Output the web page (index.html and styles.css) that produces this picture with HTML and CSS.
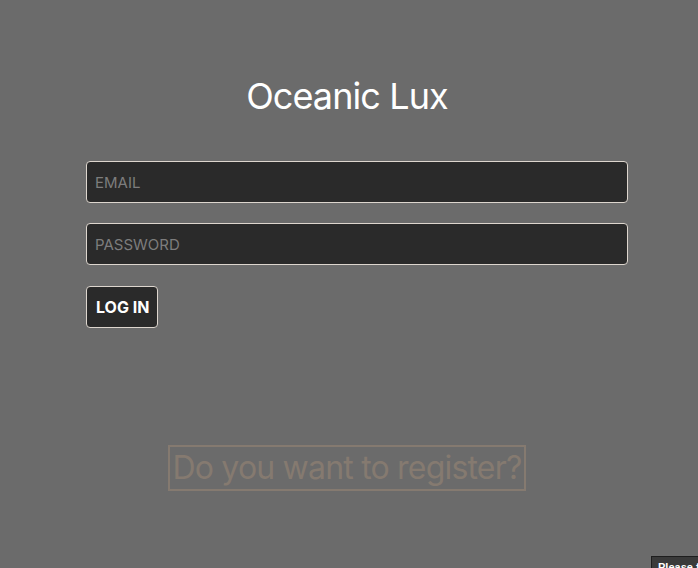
FILE: index.html
```html
<!DOCTYPE html>
<html>
<head>
<meta charset="utf-8">
<link rel="stylesheet" href="styles.css">
</head>
<body>
<main class="page">
  <h1 class="title">Oceanic Lux</h1>
  <form class="form">
    <input class="field" type="email" placeholder="EMAIL">
    <input class="field" type="password" placeholder="PASSWORD">
    <button class="btn" type="button">LOG IN</button>
  </form>
  <div class="register-wrap">
    <a class="register">Do you want to register?</a>
  </div>
</main>
<div class="tooltip">Please fill out this field.</div>
</body>
</html>
```
FILE: styles.css
```css
html, body {
  margin: 0;
  padding: 0;
  height: 100%;
  overflow: hidden;
}
body {
  background: #6b6b6b;
  font-family: Inter, "Noto Sans", sans-serif;
  position: relative;
}
.page {
  display: flex;
  flex-direction: column;
}
.title {
  margin: 74px 0 0;
  padding-right: 4px;
  text-align: center;
  font-size: 36px;
  letter-spacing: -0.9px;
  font-weight: 400;
  color: #ffffff;
  line-height: 44px;
}
.form {
  display: flex;
  flex-direction: column;
  align-items: flex-start;
  gap: 20px;
  margin: 43px 0 0 86px;
  width: 542px;
}
.field {
  box-sizing: border-box;
  width: 542px;
  height: 42px;
  background: #2a2a2a;
  border: 1px solid #ddd6ce;
  border-radius: 4px;
  padding: 0 8px;
  font-family: Inter, sans-serif;
  font-size: 15px;
  color: #fff;
  outline: none;
}
.field::placeholder {
  color: #7d7d7d;
}
.btn {
  box-sizing: border-box;
  height: 42px;
  margin-top: 1px;
  padding: 0 8px 0 9px;
  background: #2a2a2a;
  border: 1px solid #ddd6ce;
  border-radius: 4px;
  color: #ffffff;
  font-family: Inter, sans-serif;
  font-size: 16px;
  font-weight: 700;
}
.register-wrap {
  display: flex;
  justify-content: center;
  margin-top: 117px;
  padding-right: 4px;
}
.register {
  box-sizing: border-box;
  height: 46px;
  padding: 0 2px;
  border: 2px solid #857a70;
  color: #857a70;
  font-size: 32px;
  letter-spacing: -0.8px;
  line-height: 42px;
}
.tooltip {
  position: absolute;
  left: 651px;
  top: 556px;
  background: #3a3a3a;
  border: 1px solid #1e1e1e;
  color: #fff;
  font-family: "Liberation Sans", Arial, sans-serif;
  font-size: 11px;
  font-weight: 700;
  padding: 4px 6px;
  white-space: nowrap;
}
```
